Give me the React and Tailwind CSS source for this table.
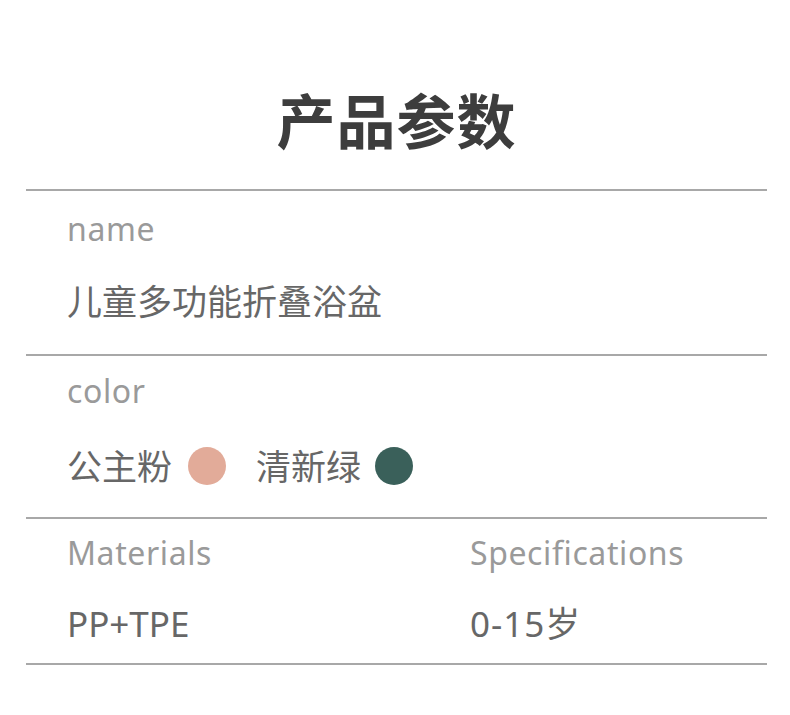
import React from "react";

const font = { fontFamily: '"Noto Sans", "Noto Sans CJK SC", sans-serif' };

const Label = ({ children, className = "" }) => (
  <p className={`text-[32px] leading-[32px] tracking-[0.6px] text-[#9a9a9a] ${className}`}>{children}</p>
);

const Value = ({ children, className = "" }) => (
  <p className={`text-[35px] leading-[35px] text-[#676767] ${className}`}>{children}</p>
);

const Swatch = ({ color }) => (
  <span className={`inline-block w-[38px] h-[38px] rounded-full ${color}`} />
);

export default function App() {
  return (
    <div className="w-[790px] h-[715px] bg-white pl-[26px] pr-[23px]" style={font}>
      <div className="h-[189px] pt-[89px] flex justify-center">
        <h1 className="text-[59px] leading-[59px] tracking-[1px] font-bold text-[#3d3d3d] font-['Noto_Sans_CJK_SC',sans-serif]">
          产品参数
        </h1>
      </div>

      {/* name */}
      <div className="border-t-2 border-[#a8a8a8] pl-[41px] pt-[22px] pb-[35px]">
        <Label>name</Label>
        <Value className="mt-[39px]">儿童多功能折叠浴盆</Value>
      </div>

      {/* color */}
      <div className="border-t-2 border-[#a8a8a8] pl-[41px] pt-[19px] pb-[32px]">
        <Label>color</Label>
        <div className="mt-[40px] h-[38px] flex items-center">
          <Value>公主粉</Value>
          <span className="ml-[16px] flex">
            <Swatch color="bg-[#e2ab99]" />
          </span>
          <Value className="ml-[30px]">清新绿</Value>
          <span className="ml-[14px] flex">
            <Swatch color="bg-[#3a605a]" />
          </span>
        </div>
      </div>

      {/* materials / specifications */}
      <div className="border-t-2 border-b-2 border-[#a8a8a8] pl-[41px] pt-[18px] pb-[22px] grid grid-cols-[403px_1fr]">
        <div>
          <Label>Materials</Label>
          <Value className="mt-[37px]">PP+TPE</Value>
        </div>
        <div>
          <Label>Specifications</Label>
          <Value className="mt-[37px] tracking-[1px]">0-15岁</Value>
        </div>
      </div>
    </div>
  );
}
